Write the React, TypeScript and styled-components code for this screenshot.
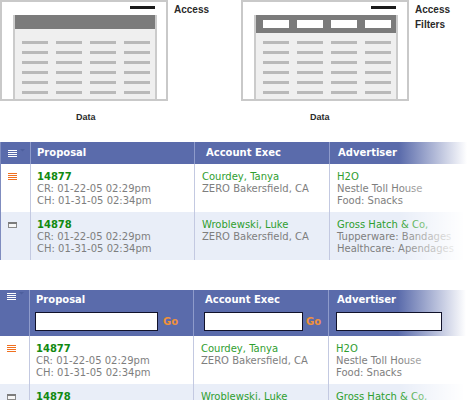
import React from "react";
import styled, { createGlobalStyle } from "styled-components";

const GlobalStyle = createGlobalStyle`
  html, body {
    margin: 0;
    padding: 0;
    overflow: hidden;
    background: #fff;
  }
  body {
    font-family: "DejaVu Sans", Verdana, sans-serif;
  }
`;

interface Proposal {
  id: string;
  created: string;
  changed: string;
  exec: string;
  office: string;
  advertiser: string;
  details: string[];
  open: boolean;
}

const proposals: Proposal[] = [
  {
    id: "14877",
    created: "01-22-05 02:29pm",
    changed: "01-31-05 02:34pm",
    exec: "Courdey, Tanya",
    office: "ZERO Bakersfield, CA",
    advertiser: "H2O",
    details: ["Nestle Toll House", "Food: Snacks"],
    open: true,
  },
  {
    id: "14878",
    created: "01-22-05 02:29pm",
    changed: "01-31-05 02:34pm",
    exec: "Wroblewski, Luke",
    office: "ZERO Bakersfield, CA",
    advertiser: "Gross Hatch & Co,",
    details: ["Tupperware: Bandages", "Healthcare: Apendages"],
    open: false,
  },
];

const columns = [
  { title: "Proposal", pad: 5, input: 123, go: 5 },
  { title: "Account Exec", pad: 10, input: 99, go: 3 },
  { title: "Advertiser", pad: 7, input: 106 },
];

/* ---------- diagrams ---------- */

function MiniTable({ filters }: { filters?: boolean }) {
  return (
    <MiniTableBox>
      <MiniHeader $filters={filters}>
        {filters && [0, 1, 2, 3].map((i) => <MiniField key={i} />)}
      </MiniHeader>
      <MiniBody $top={filters ? 8 : 12}>
        {Array.from({ length: 24 }).map((_, i) => (
          <MiniLine key={i} />
        ))}
      </MiniBody>
    </MiniTableBox>
  );
}

function Diagram({
  labels,
  filters,
  captionIndent,
  width,
}: {
  labels: string[];
  filters?: boolean;
  captionIndent: number;
  width?: number;
}) {
  return (
    <DiagramGroup $width={width}>
      <Figure>
        <Frame>
          <AccessBar />
          <MiniTable filters={filters} />
        </Frame>
        <Caption $indent={captionIndent}>Data</Caption>
      </Figure>
      <Labels>
        {labels.map((l) => (
          <span key={l}>{l}</span>
        ))}
      </Labels>
    </DiagramGroup>
  );
}

/* ---------- icons ---------- */

const ListIcon = ({ color, caret }: { color: string; caret?: boolean }) => (
  <svg width={caret ? 17 : 9} height="8" viewBox={caret ? "0 0 17 8" : "0 0 9 8"}>
    {[0, 2, 4, 6].map((y) => (
      <rect key={y} x="0" y={caret ? y + 1 : y} width="9" height="1" fill={color} />
    ))}
    {caret && <polygon points="12,0 17,0 14.5,2.5" fill="#4d5f9d" />}
  </svg>
);

const WindowIcon = () => (
  <svg width="9" height="8" viewBox="0 0 9 8">
    <rect x="0.5" y="1.5" width="8" height="5" fill="#f6f6f6" stroke="#8a8a8a" />
    <rect x="0" y="1" width="9" height="2" fill="#7c7c7c" />
  </svg>
);

/* ---------- table ---------- */

function ProposalTable({ filters, bordered }: { filters?: boolean; bordered?: boolean }) {
  return (
    <Table $bordered={bordered}>
      <HeaderRow>
        <IconCell $top={filters ? 2 : 7}>
          <ListIcon color="#fff" caret />
        </IconCell>
        {columns.map((c) => (
          <HeaderCell key={c.title} $pad={c.pad} $filters={filters}>
            <Title>{c.title}</Title>
            {filters && (
              <FilterRow>
                <FilterInput $w={c.input} />
                {c.go !== undefined && <Go $gap={c.go}>Go</Go>}
              </FilterRow>
            )}
          </HeaderCell>
        ))}
      </HeaderRow>
      <Body>
        {proposals.map((p, i) => (
          <BodyRow key={p.id} $alt={i % 2 === 1}>
            <IconCell $top={9}>
              {p.open ? <ListIcon color="#f0701f" /> : <WindowIcon />}
            </IconCell>
            <BodyCell $pad={6}>
              <Strong>{p.id}</Strong>
              <Muted>CR: {p.created}</Muted>
              <Muted>CH: {p.changed}</Muted>
            </BodyCell>
            <BodyCell $pad={7}>
              <Green>{p.exec}</Green>
              <Muted>{p.office}</Muted>
            </BodyCell>
            <BodyCell $pad={7}>
              <Green>{p.advertiser}</Green>
              {p.details.map((d) => (
                <Muted key={d}>{d}</Muted>
              ))}
            </BodyCell>
          </BodyRow>
        ))}
        <Fade />
      </Body>
    </Table>
  );
}

export default function App() {
  return (
    <>
      <GlobalStyle />
      <Page>
        <Diagrams>
          <Diagram labels={["Access"]} captionIndent={76} width={241} />
          <Diagram labels={["Access", "Filters"]} filters captionIndent={69} />
        </Diagrams>
        <ProposalTable bordered />
        <Spacer />
        <ProposalTable filters />
      </Page>
    </>
  );
}

const Page = styled.div`
  width: 468px;
  display: flex;
  flex-direction: column;
`;

const Diagrams = styled.div`
  display: flex;
  height: 142px;
`;

const DiagramGroup = styled.div<{ $width?: number }>`
  display: flex;
  align-items: flex-start;
  width: ${({ $width }) => ($width ? `${$width}px` : "auto")};
`;

const Figure = styled.div`
  display: flex;
  flex-direction: column;
`;

const Frame = styled.div`
  box-sizing: border-box;
  width: 168px;
  height: 101px;
  border: 2px solid #c9c9c9;
  background: #fff;
  display: flex;
  flex-direction: column;
`;

const AccessBar = styled.div`
  align-self: flex-end;
  width: 25px;
  height: 3px;
  margin: 4px 11px 0 0;
  background: #1b1b1b;
`;

const MiniTableBox = styled.div`
  flex: 1;
  margin: 6px 9px 0 11px;
  border-left: 2px solid #cbcbcb;
  border-right: 2px solid #cbcbcb;
  background: #efefef;
  display: flex;
  flex-direction: column;
`;

const MiniHeader = styled.div<{ $filters?: boolean }>`
  box-sizing: border-box;
  height: ${({ $filters }) => ($filters ? 18 : 14)}px;
  background: #7b7b7b;
  display: grid;
  grid-template-columns: repeat(4, 26px);
  column-gap: 8px;
  padding: 5px 0 5px 7px;
`;

const MiniField = styled.div`
  background: #fff;
`;

const MiniBody = styled.div<{ $top: number }>`
  display: grid;
  grid-template-columns: repeat(4, 26px);
  grid-auto-rows: 3px;
  gap: 7px 8px;
  padding: ${({ $top }) => $top}px 0 0 7px;
`;

const MiniLine = styled.div`
  background: #b9b9b9;
`;

const Caption = styled.div<{ $indent: number }>`
  margin-top: 11px;
  padding-left: ${({ $indent }) => $indent}px;
  font-family: "Liberation Sans", Arial, sans-serif;
  font-weight: bold;
  font-size: 9px;
  line-height: 11px;
  color: #2a2a2a;
`;

const Labels = styled.div`
  display: flex;
  flex-direction: column;
  padding-top: 2px;
  margin-left: 6px;
  font-family: "Liberation Sans", Arial, sans-serif;
  font-weight: bold;
  font-size: 10px;
  line-height: 15px;
  color: #2a2a2a;
`;

const Table = styled.div<{ $bordered?: boolean }>`
  border-left: ${({ $bordered }) => ($bordered ? "1px solid #7f8cbf" : "0")};
  font-family: "DejaVu Sans", Verdana, sans-serif;
  font-size: 10px;
  line-height: 12px;
`;

const HeaderRow = styled.div`
  display: grid;
  grid-template-columns: 29px 164px 135px 1fr;
  background: linear-gradient(to right, #5a6bab 0, #5a6bab 398px, #ffffff 466px);
`;

const IconCell = styled.div<{ $top: number }>`
  padding: ${({ $top }) => $top}px 0 0 7px;
  line-height: 0;
`;

const HeaderCell = styled.div<{ $pad: number; $filters?: boolean }>`
  border-left: 1px solid #8e9bcb;
  padding: ${({ $filters }) => ($filters ? "4px 0 5px" : "5px 0 5px")};
  padding-left: ${({ $pad }) => $pad}px;
  display: flex;
  flex-direction: column;
  gap: 6px;
`;

const Title = styled.div`
  margin-left: 1px;
  color: #fff;
  font-weight: bold;
  white-space: nowrap;
`;

const FilterRow = styled.div`
  display: flex;
  align-items: center;
  height: 19px;
`;

const FilterInput = styled.input<{ $w: number }>`
  box-sizing: border-box;
  width: ${({ $w }) => $w}px;
  height: 19px;
  margin: 0;
  padding: 0 3px;
  border: 1px solid #11122a;
  background: #fff;
  outline: none;
`;

const Go = styled.span<{ $gap: number }>`
  margin-left: ${({ $gap }) => $gap}px;
  color: #f0913a;
  font-weight: bold;
  font-size: 10px;
`;

const Body = styled.div`
  position: relative;
`;

const BodyRow = styled.div<{ $alt: boolean }>`
  display: grid;
  grid-template-columns: 29px 164px 135px 1fr;
  background: ${({ $alt }) => ($alt ? "#e9eef8" : "#fff")};
`;

const BodyCell = styled.div<{ $pad: number }>`
  border-left: 1px solid #c3c9e1;
  padding: 7px 0 5px ${({ $pad }) => $pad}px;
  white-space: nowrap;
  overflow: hidden;
  display: flex;
  flex-direction: column;
`;

const Strong = styled.span`
  color: #118a11;
  font-weight: bold;
`;

const Green = styled.span`
  color: #2f9e2f;
`;

const Muted = styled.span`
  color: #7e7e7e;
`;

const Fade = styled.div`
  position: absolute;
  top: 0;
  right: 0;
  bottom: 0;
  width: 70px;
  background: linear-gradient(to right, rgba(255, 255, 255, 0), #fff 95%);
  pointer-events: none;
`;

const Spacer = styled.div`
  height: 30px;
`;
